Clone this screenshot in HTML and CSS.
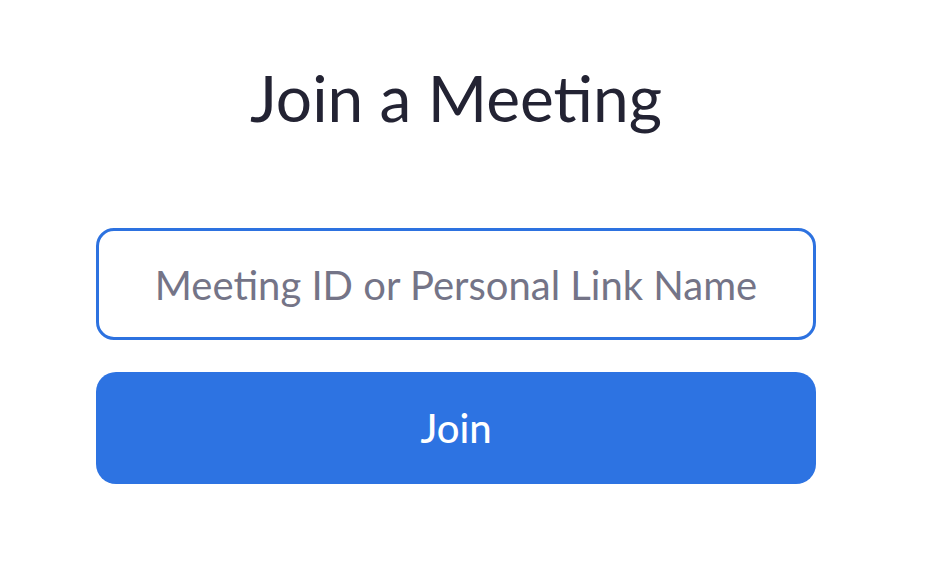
FILE: index.html
```html
<!DOCTYPE html>
<html>
<head>
<meta charset="utf-8">
<link rel="stylesheet" href="styles.css">
</head>
<body>
<main class="join">
  <h1 class="title">Join a Meeting</h1>
  <form class="form">
    <input class="field" type="text" placeholder="Meeting ID or Personal Link Name">
    <button class="btn" type="button">Join</button>
  </form>
</main>
</body>
</html>
```

FILE: styles.css
```css
html, body {
  margin: 0;
  padding: 0;
  background: #fff;
}
body {
  font-family: Lato, "Open Sans", sans-serif;
  width: 934px;
  height: 576px;
  overflow: hidden;
}
.join {
  width: 720px;
  margin-left: 96px;
  padding-top: 58px;
  display: flex;
  flex-direction: column;
}
.title {
  margin: 0;
  font-size: 64px;
  font-weight: 400;
  line-height: 80px;
  text-align: center;
  color: #232333;
}
.form {
  margin-top: 90px;
  display: flex;
  flex-direction: column;
  gap: 32px;
}
.field {
  box-sizing: border-box;
  width: 720px;
  height: 112px;
  border: 3px solid #2d72e0;
  border-radius: 18px;
  font-family: Lato, sans-serif;
  font-size: 40px;
  text-align: center;
  color: #232333;
  outline: none;
  padding: 2px 20px 0;
}
.field::placeholder {
  color: #747487;
  opacity: 1;
}
.btn {
  box-sizing: border-box;
  width: 720px;
  height: 112px;
  border: none;
  border-radius: 20px;
  background: #2d73e2;
  color: #fff;
  font-family: Lato, sans-serif;
  font-size: 40px;
  font-weight: 500;
}
```
